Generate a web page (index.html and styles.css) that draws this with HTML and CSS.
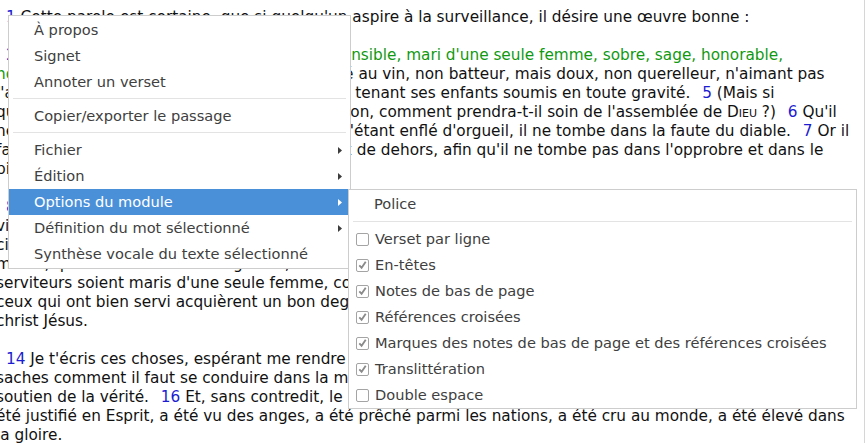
FILE: index.html
```html
<!DOCTYPE html>
<html lang="fr">
<head>
  <meta charset="UTF-8">
  <title>1 Timothée 3</title>
  <link rel="stylesheet" href="styles.css">
</head>
<body>
  <div class="page">
    <div class="verses">
      <p><span class="vn">1</span> Cette parole est certaine, que si quelqu'un aspire à la surveillance, il désire une œuvre bonne :</p>
      <p><span class="vn">2</span> <span class="jesus">Il faut donc que le surveillant soit irrépréhensible, mari d'une seule femme, sobre, sage, honorable, hospitalier, propre à enseigner,</span> <span class="vn">3</span> non adonné au vin, non batteur, mais doux, non querelleur, n'aimant pas l'argent, <span class="vn">4</span> conduisant bien sa propre maison, tenant ses enfants soumis en toute gravité. <span class="vn">5</span> (Mais si quelqu'un ne sait pas conduire sa propre maison, comment prendra-t-il soin de l'assemblée de <span class="sc">Dieu</span> ?) <span class="vn">6</span> Qu'il ne soit pas nouvellement converti, de peur qu'étant enflé d'orgueil, il ne tombe dans la faute du diable. <span class="vn">7</span> Or il faut aussi qu'il ait un bon témoignage de ceux de dehors, afin qu'il ne tombe pas dans l'opprobre et dans le piège du diable.</p>
      <p><span class="vn">8</span> De même, il faut que les serviteurs soient graves, non doubles en paroles, non adonnés à beaucoup de<br>vin, non avides d'un gain honteux, <span class="vn">9</span> gardant le mystère de la foi dans une conscience pure. <span class="vn">10</span> Et que ceux-<br>ci aussi soient premièrement mis à l'épreuve, ensuite qu'ils servent, étant trouvés irréprochables. <span class="vn">11</span> De<br>même, que les femmes soient graves, non médisantes, sobres, fidèles en toutes choses. <span class="vn">12</span> Que les<br>serviteurs soient maris d'une seule femme, conduisant bien leurs enfants et leurs propres maisons ; <span class="vn">13</span> car<br>ceux qui ont bien servi acquièrent un bon degré pour eux, et une grande hardiesse dans la foi qui est dans le<br>christ Jésus.</p>
      <p><span class="vn">14</span> Je t'écris ces choses, espérant me rendre bientôt auprès de toi ; <span class="vn">15</span> mais afin que, si je tarde, tu<br>saches comment il faut se conduire dans la maison de <span class="sc">Dieu</span>, qui est l'assemblée du <span class="sc">Dieu</span> vivant, la colonne et le<br>soutien de la vérité. <span class="vn">16</span> Et, sans contredit, le mystère de la piété est grand : <span class="sc">Dieu</span> a été manifesté en chair, a<br>été justifié en Esprit, a été vu des anges, a été prêché parmi les nations, a été cru au monde, a été élevé dans la gloire.</p>
    </div>
  </div>

  <div class="menu ctx">
    <div class="item">À propos</div>
    <div class="item">Signet</div>
    <div class="item">Annoter un verset</div>
    <div class="sep"></div>
    <div class="item">Copier/exporter le passage</div>
    <div class="sep"></div>
    <div class="item">Fichier <svg class="arrow" width="4" height="7" viewBox="0 0 4 7"><path d="M0 0 L4 3.5 L0 7 Z"/></svg></div>
    <div class="item">Édition <svg class="arrow" width="4" height="7" viewBox="0 0 4 7"><path d="M0 0 L4 3.5 L0 7 Z"/></svg></div>
    <div class="item active">Options du module <svg class="arrow" width="4" height="7" viewBox="0 0 4 7"><path d="M0 0 L4 3.5 L0 7 Z"/></svg></div>
    <div class="item">Définition du mot sélectionné <svg class="arrow" width="4" height="7" viewBox="0 0 4 7"><path d="M0 0 L4 3.5 L0 7 Z"/></svg></div>
    <div class="item">Synthèse vocale du texte sélectionné</div>
  </div>

  <div class="menu sub">
    <div class="item">Police</div>
    <div class="sep"></div>
    <div class="item check"><span class="box"></span>Verset par ligne</div>
    <div class="item check on"><span class="box"><svg width="12" height="12" viewBox="0 0 12 12"><path d="M2.5 6.5 L5 9 L9.5 2.5"/></svg></span>En-têtes</div>
    <div class="item check on"><span class="box"><svg width="12" height="12" viewBox="0 0 12 12"><path d="M2.5 6.5 L5 9 L9.5 2.5"/></svg></span>Notes de bas de page</div>
    <div class="item check on"><span class="box"><svg width="12" height="12" viewBox="0 0 12 12"><path d="M2.5 6.5 L5 9 L9.5 2.5"/></svg></span>Références croisées</div>
    <div class="item check on"><span class="box"><svg width="12" height="12" viewBox="0 0 12 12"><path d="M2.5 6.5 L5 9 L9.5 2.5"/></svg></span>Marques des notes de bas de page et des références croisées</div>
    <div class="item check on"><span class="box"><svg width="12" height="12" viewBox="0 0 12 12"><path d="M2.5 6.5 L5 9 L9.5 2.5"/></svg></span>Translittération</div>
    <div class="item check"><span class="box"></span>Double espace</div>
  </div>
</body>
</html>
```

FILE: styles.css
```css
html, body {
  margin: 0;
  padding: 0;
  width: 866px;
  height: 443px;
  overflow: hidden;
  background: #fff;
  font-family: 'DejaVu Sans', sans-serif;
}

.page {
  width: 864px;
  height: 443px;
  border-right: 1px solid #d6d6d6;
  overflow: hidden;
}

.verses {
  margin-left: -4px;
  padding-top: 8px;
  width: 856px;
}

.verses p {
  margin: 0 0 19px;
  font-size: 15.3px;
  line-height: 19px;
  color: #111;
  text-indent: 3px;
}

.vn {
  color: #1c1cd0;
  margin-left: 7px;
}

.jesus {
  color: #119911;
}

.sc {
  font-variant: small-caps;
}

/* popup menus */
.menu {
  position: absolute;
  background: #fff;
  border: 1px solid #cdcdcd;
  font-size: 14.6px;
  color: #404040;
}

.ctx {
  left: 8px;
  top: 15px;
  width: 341px;
  padding: 1px 0;
}

.sub {
  left: 348px;
  top: 189px;
  width: 507px;
  padding: 1px 0 0;
}

.item {
  height: 26px;
  line-height: 26px;
  padding: 0 8px 0 25px;
  display: flex;
  align-items: center;
  justify-content: space-between;
  white-space: nowrap;
}

.item .arrow {
  fill: #3c3c3c;
}

.item.active {
  background: #4a90d9;
  color: #fff;
}

.item.active .arrow {
  fill: #fff;
}

.sep {
  height: 1px;
  background: #e3e3e3;
  margin: 3px 4px 4px;
}

.sub .sep {
  margin: 4px 4px 4px;
}

.item.check {
  justify-content: flex-start;
  padding-left: 7px;
}

.box {
  width: 11px;
  height: 11px;
  border: 1px solid #a4a4a4;
  border-radius: 2px;
  margin-right: 6px;
  display: flex;
  align-items: center;
  justify-content: center;
  background: #fff;
}

.box svg {
  fill: none;
  stroke: #8a8a8a;
  stroke-width: 2;
}
```
